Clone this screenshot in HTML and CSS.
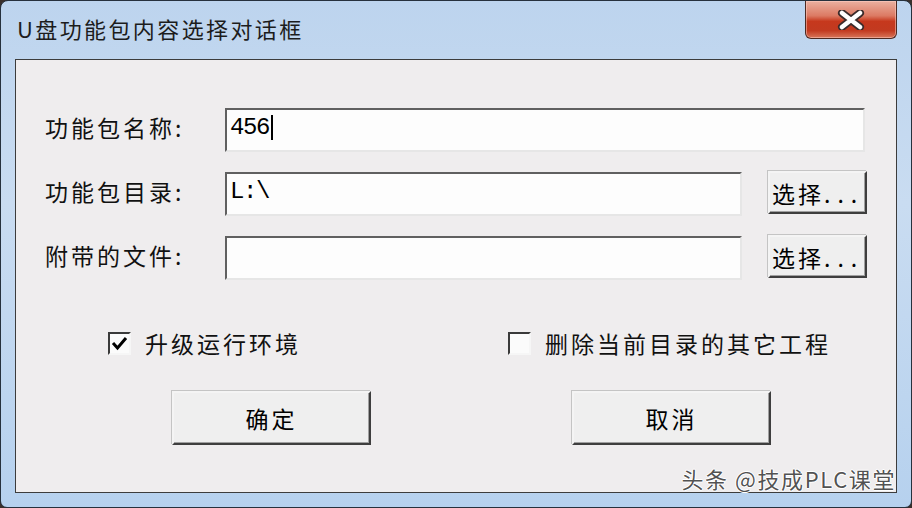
FILE: index.html
```html
<!DOCTYPE html>
<html lang="zh-CN">
<head>
    <meta charset="UTF-8">
    <meta name="viewport" content="width=device-width, initial-scale=1.0">
    <title>U盘功能包内容选择对话框</title>
    <link rel="stylesheet" href="styles.css">
</head>
<body>
    <div class="window">
        <div class="titlebar">
            <span class="title">U盘功能包内容选择对话框</span>
            <div class="close-btn">
                <svg width="28" height="20" viewBox="0 0 28 20">
                    <path d="M5 3 L23 17 M23 3 L5 17" stroke="#3b2b2b" stroke-width="8" stroke-linecap="round"/>
                    <path d="M5 3 L23 17 M23 3 L5 17" stroke="#ffffff" stroke-width="4.5" stroke-linecap="round"/>
                </svg>
            </div>
        </div>

        <div class="client">
            <div class="fields">
                <span class="field-label">功能包名称:</span>
                <div class="textbox wide">456<span class="caret"></span></div>

                <span class="field-label">功能包目录:</span>
                <div class="textbox">L:\</div>
                <button class="btn browse">选择<span class="dots">...</span></button>

                <span class="field-label">附带的文件:</span>
                <div class="textbox"></div>
                <button class="btn browse">选择<span class="dots">...</span></button>
            </div>

            <div class="checks">
                <div class="check">
                    <span class="box">
                        <svg width="19" height="19" viewBox="0 0 19 19">
                            <path d="M3 9 L7.5 14 L16 4" fill="none" stroke="#000" stroke-width="3"/>
                        </svg>
                    </span>
                    升级运行环境
                </div>
                <div class="check">
                    <span class="box"></span>
                    删除当前目录的其它工程
                </div>
            </div>

            <div class="actions">
                <button class="btn action">确定</button>
                <button class="btn action">取消</button>
            </div>

            <div class="watermark">头条 @技成PLC课堂</div>
        </div>
    </div>
</body>
</html>
```

FILE: styles.css
```css
body {
    margin: 0;
    background: #3a302c;
    font-family: "Noto Sans CJK SC", "Noto Sans", sans-serif;
    color: #111;
}
.window {
    box-sizing: border-box;
    width: 912px;
    height: 508px;
    border: 1px solid #26313d;
    border-radius: 8px 8px 7px 7px;
    background: linear-gradient(#bdd4ee, #c9dcf1 40%, #b6d1ee);
    display: flex;
    flex-direction: column;
    overflow: hidden;
}
.titlebar {
    height: 58px;
    display: flex;
    align-items: flex-start;
    padding-left: 16px;
}
.title {
    font-size: 22px;
    letter-spacing: 2.4px;
    line-height: 54px;
    color: #1c1c1c;
}
.close-btn {
    box-sizing: border-box;
    margin-left: auto;
    margin-right: 14px;
    width: 92px;
    height: 38px;
    border: 1px solid #4e2a22;
    border-top: none;
    border-radius: 0 0 6px 6px;
    background: linear-gradient(#eab0a0, #dc7a63 40%, #c6381d 55%, #c23a20 80%, #d8765a);
    box-shadow: inset 0 0 0 1px rgba(255, 210, 200, 0.5);
    display: flex;
    justify-content: center;
    align-items: center;
}

/* client area */
.client {
    position: relative;
    box-sizing: border-box;
    height: 434px;
    margin: 0 14px;
    border: 1px solid #3c3c3c;
    background: #efedee;
}
.fields {
    display: grid;
    grid-template-columns: 180px 517px 125px;
    grid-auto-rows: 44px;
    row-gap: 20px;
    padding: 48px 0 0 29px;
}
.field-label {
    font-size: 23px;
    letter-spacing: 3px;
    align-self: center;
    margin-top: -6px;
}
.textbox {
    box-sizing: border-box;
    height: 44px;
    border: 2px solid;
    border-color: #606060 #e6e6e6 #e6e6e6 #606060;
    background: #fdfdfd;
    padding: 0 3px;
    font-family: "Liberation Mono", monospace;
    font-size: 24px;
    letter-spacing: -1.4px;
    line-height: 36px;
    color: #000;
}
.textbox.wide {
    grid-column: 2 / 4;
    width: 640px;
}
.caret {
    display: inline-block;
    width: 2px;
    height: 25px;
    margin-left: 2px;
    background: #000;
    vertical-align: -6px;
}

.btn {
    box-sizing: border-box;
    border: 2px solid;
    border-color: #f4f4f4 #3e3e3e #3e3e3e #f4f4f4;
    box-shadow: inset -1px -1px 0 #a0a0a0, -1px -1px 0 #c4c4c4;
    background: #efefef;
    font-family: "Noto Sans CJK SC", sans-serif;
    font-size: 23px;
    letter-spacing: 3px;
    color: #000;
    padding: 0;
}
.browse {
    width: 99px;
    height: 43px;
    margin-top: -1px;
    justify-self: end;
    align-self: start;
    text-align: left;
    padding-left: 2px;
}
.dots {
    letter-spacing: 7px;
}

.checks {
    display: flex;
    padding-left: 92px;
    margin-top: 48px;
    height: 30px;
}
.check {
    flex: none;
    display: flex;
    align-items: center;
    gap: 14px;
    font-size: 23px;
    letter-spacing: 3px;
}
.check:first-child {
    width: 400px;
}
.box {
    box-sizing: border-box;
    width: 23px;
    height: 23px;
    border: 2px solid;
    border-color: #3a3a3a #f6f6f6 #f6f6f6 #3a3a3a;
    background: #fbfbfb;
    display: flex;
    justify-content: center;
    align-items: center;
}

.actions {
    display: flex;
    gap: 201px;
    padding-left: 156px;
    margin-top: 33px;
}
.action {
    width: 199px;
    height: 54px;
}

.watermark {
    position: absolute;
    right: 0;
    bottom: -1px;
    font-size: 22px;
    letter-spacing: 1.6px;
    line-height: 30px;
    color: rgba(50, 50, 50, 0.85);
    text-shadow: 1px 0 0 #fff, -1px 0 0 #fff, 0 1px 0 #fff, 0 -1px 0 #fff;
}
```
